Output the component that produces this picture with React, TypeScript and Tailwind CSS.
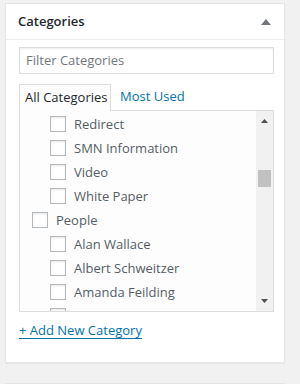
import React from "react";

const children1 = ["Redirect", "SMN Information", "Video", "White Paper"];
const people = ["Alan Wallace", "Albert Schweitzer", "Amanda Feilding", "Andrew Weil"];

function Box() {
  return <span className="block w-[16px] h-[16px] border border-[#b4b9be] bg-white shrink-0 shadow-[inset_0_1px_2px_rgba(0,0,0,0.1)]" />;
}

function Row({ label, indent }: { label: string; indent: boolean }) {
  return (
    <div className={`flex items-center h-[24px] ${indent ? "pl-[30px]" : "pl-[12px]"}`}>
      <Box />
      <span className="ml-[8px] text-[13px] text-[#555d66] leading-none whitespace-nowrap">{label}</span>
    </div>
  );
}

export default function App() {
  return (
    <div className="w-[300px] h-[384px] bg-[#f1f1f1] relative overflow-hidden" style={{ fontFamily: '"Open Sans", sans-serif' }}>
      <div className="absolute left-[5px] top-[3px] w-[280px] h-[360px] bg-white border border-[#e5e5e5] shadow-[0_1px_1px_rgba(0,0,0,0.04)]">
        <div className="h-[36px] border-b border-[#eeeeee] flex items-center justify-between pl-[12px] pr-[13px]">
          <span className="text-[13px] font-semibold text-[#23282d] whitespace-nowrap">Categories</span>
          <svg width="10" height="6" viewBox="0 0 10 6"><path d="M5 0 L10 6 L0 6 Z" fill="#72777c" /></svg>
        </div>
        <div className="px-[13px] pt-[7px]">
          <div className="h-[27px] w-[255px] border border-[#dddddd] shadow-[inset_0_1px_2px_rgba(0,0,0,0.07)] flex items-center px-[6px]">
            <span className="text-[13px] text-[#72777c] whitespace-nowrap">Filter Categories</span>
          </div>
          <div className="flex mt-[9px] h-[27px] items-end">
            <div className="h-[27px] w-[92px] border border-b-0 border-[#dddddd] bg-[#fdfdfd] flex items-center pl-[5px] relative z-10 -mb-px shrink-0">
              <span className="text-[13px] text-[#23282d] whitespace-nowrap">All Categories</span>
            </div>
            <div className="h-[27px] flex items-center pl-[9px]">
              <span className="text-[13px] text-[#0073aa] whitespace-nowrap">Most Used</span>
            </div>
          </div>
          <div className="h-[202px] w-[255px] border border-[#dddddd] bg-[#fdfdfd] flex overflow-hidden">
            <div className="flex-1 pt-[1px] overflow-hidden">
              {children1.map((c) => <Row key={c} label={c} indent />)}
              <Row label="People" indent={false} />
              {people.map((c) => <Row key={c} label={c} indent />)}
            </div>
            <div className="w-[17px] bg-[#f1f1f1] relative shrink-0">
              <svg className="absolute left-[5px] top-[8px]" width="7" height="4" viewBox="0 0 7 4"><path d="M3.5 0 L7 4 L0 4 Z" fill="#505050" /></svg>
              <div className="absolute left-[2px] top-[59px] w-[13px] h-[17px] bg-[#c1c1c1]" />
              <svg className="absolute left-[5px] bottom-[8px]" width="7" height="4" viewBox="0 0 7 4"><path d="M0 0 L7 0 L3.5 4 Z" fill="#505050" /></svg>
            </div>
          </div>
          <div className="mt-[9px] h-[20px] flex items-center">
            <span className="text-[13px] text-[#0073aa] underline underline-offset-[3px] whitespace-nowrap">+ Add New Category</span>
          </div>
        </div>
      </div>
      <div className="absolute left-[5px] top-[383px] w-[280px] h-[10px] bg-white border border-[#e5e5e5]" />
    </div>
  );
}
